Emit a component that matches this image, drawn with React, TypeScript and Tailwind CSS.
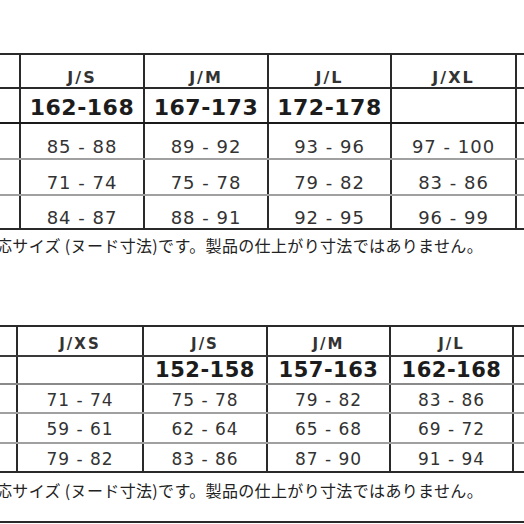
import React from 'react';

type Row = {
  cells: string[];
  kind: 'head' | 'height' | 'data';
  h: string;
  line: string;
  pad: string;
};

const table1: Row[] = [
  { cells: ['', 'J/S', 'J/M', 'J/L', 'J/XL', ''], kind: 'head', h: 'h-[34px]', line: 'border-[#2a2a2a]', pad: 'pt-[13px]' },
  { cells: ['', '162-168', '167-173', '172-178', '', ''], kind: 'height', h: 'h-[35px]', line: 'border-[#1a1a1a]', pad: 'pt-[4px]' },
  { cells: ['', '85 - 88', '89 - 92', '93 - 96', '97 - 100', ''], kind: 'data', h: 'h-[36px]', line: 'border-[#a0a0a0]', pad: 'pt-[11px]' },
  { cells: ['', '71 - 74', '75 - 78', '79 - 82', '83 - 86', ''], kind: 'data', h: 'h-[36px]', line: 'border-[#a0a0a0]', pad: 'pt-[11px]' },
  { cells: ['', '84 - 87', '88 - 91', '92 - 95', '96 - 99', ''], kind: 'data', h: 'h-[34px]', line: 'border-[#2a2a2a]', pad: 'pt-[11px]' },
];

const table2: Row[] = [
  { cells: ['', 'J/XS', 'J/S', 'J/M', 'J/L', ''], kind: 'head', h: 'h-[30px]', line: 'border-[#3a3a3a]', pad: 'pt-[6px]' },
  { cells: ['', '', '152-158', '157-163', '162-168', ''], kind: 'height', h: 'h-[28px]', line: 'border-[#8a8a8a]', pad: 'pt-[1px]' },
  { cells: ['', '71 - 74', '75 - 78', '79 - 82', '83 - 86', ''], kind: 'data', h: 'h-[29px]', line: 'border-[#a0a0a0]', pad: 'pt-[3px]' },
  { cells: ['', '59 - 61', '62 - 64', '65 - 68', '69 - 72', ''], kind: 'data', h: 'h-[30px]', line: 'border-[#a0a0a0]', pad: 'pt-[3px]' },
  { cells: ['', '79 - 82', '83 - 86', '87 - 90', '91 - 94', ''], kind: 'data', h: 'h-[29px]', line: 'border-[#2a2a2a]', pad: 'pt-[3px]' },
];

const textClass = (kind: Row['kind'], big: boolean) => {
  if (kind === 'head') return big ? 'text-[16px] font-bold tracking-[2px] text-[#333]' : 'text-[15px] font-bold tracking-[2px] text-[#333]';
  if (kind === 'height') return big ? 'text-[22px] font-bold tracking-[0.5px] text-[#1c1c1c]' : 'text-[21px] font-bold tracking-[0.5px] text-[#1c1c1c]';
  return big ? 'text-[18px] tracking-[1px] text-[#333]' : 'text-[17px] tracking-[1px] text-[#333]';
};

const SizeTable = ({ rows, cols, big }: { rows: Row[]; cols: string; big: boolean }) => (
  <div className="border-t-2 border-[#2a2a2a]">
    {rows.map((row, ri) => (
      <div key={ri} className={`grid ${cols} ${row.h} border-b-2 ${row.line}`}>
        {row.cells.map((c, ci) => (
          <div
            key={ci}
            className={`flex items-center justify-center ${row.pad} ${ci < 5 ? 'border-r-2 border-[#2a2a2a]' : ''}`}
          >
            <span className={`${textClass(row.kind, big)} whitespace-nowrap leading-none`}>{c}</span>
          </div>
        ))}
      </div>
    ))}
  </div>
);

const Caption = ({ h, lead }: { h: string; lead: string }) => (
  <div className={`${h} overflow-hidden`}>
    <div
      className={`-ml-[4px] whitespace-nowrap text-[16px] tracking-[0.35px] ${lead} text-[#222]`}
      style={{ fontFamily: '"Noto Sans CJK JP", sans-serif' }}
    >
      応サイズ (ヌード寸法)です。製品の仕上がり寸法ではありません。
    </div>
  </div>
);

export default function App() {
  return (
    <div
      className="w-[524px] h-[524px] overflow-hidden bg-white pt-[53px]"
      style={{ fontFamily: '"DejaVu Sans", Verdana, sans-serif' }}
    >
      <SizeTable rows={table1} cols="grid-cols-[21px_124px_124px_123px_125px_1fr]" big />
      <Caption h="h-[95px]" lead="leading-[30px]" />
      <SizeTable rows={table2} cols="grid-cols-[18px_126px_124px_123px_123px_1fr]" big={false} />
      <Caption h="h-[48px]" lead="leading-[34px]" />
      <div className="border-t-2 border-[#2a2a2a]" />
    </div>
  );
}
